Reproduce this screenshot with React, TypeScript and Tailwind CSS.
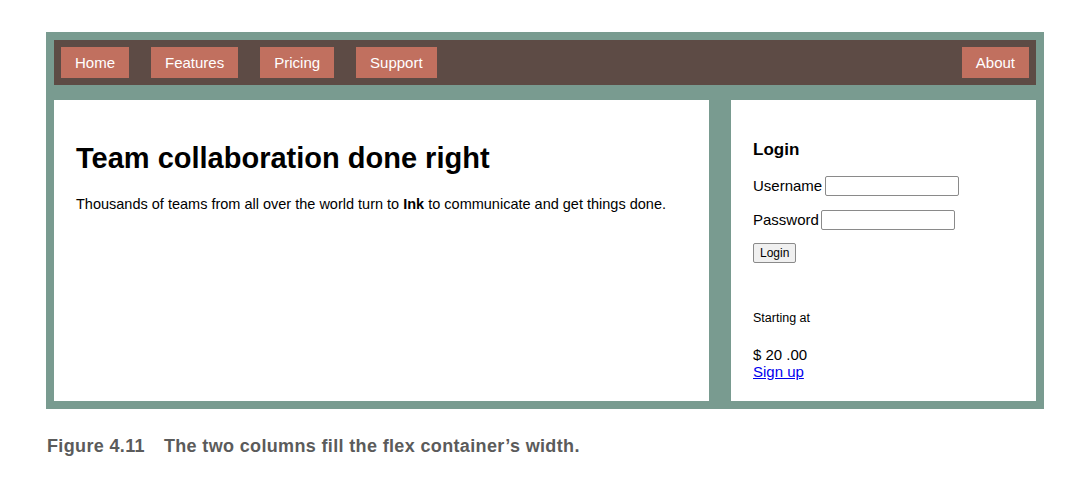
import React from "react";

const navItems = ["Home", "Features", "Pricing", "Support"];

export default function App() {
  return (
    <div className="w-[1078px] h-[486px] bg-white pt-[32px] pl-[46px] font-['Liberation_Sans',Arial,sans-serif]">
      {/* page frame */}
      <div className="w-[998px] h-[377px] bg-[#799b90] p-[8px] flex flex-col gap-[15px]">
        {/* nav bar */}
        <nav className="h-[45px] bg-[#5d4b45] px-[7px] flex items-center">
          <ul className="flex items-center gap-[22px] w-full">
            {navItems.map((item) => (
              <li key={item}>
                <a className="block h-[31px] px-[14px] bg-[#c1705f] text-white text-[15px] leading-[31px]">
                  {item}
                </a>
              </li>
            ))}
            <li className="ml-auto">
              <a className="block h-[31px] px-[14px] bg-[#c1705f] text-white text-[15px] leading-[31px]">
                About
              </a>
            </li>
          </ul>
        </nav>

        {/* two columns */}
        <div className="flex-1 flex gap-[22px]">
          <main className="w-[655px] bg-white pt-[41px] px-[22px]">
            <h1 className="text-[29px] font-bold leading-[35px] text-black">
              Team collaboration done right
            </h1>
            <p className="mt-[19px] text-[14.5px] leading-[18px] text-black">
              Thousands of teams from all over the world turn to <b>Ink</b> to communicate and get things done.
            </p>
          </main>

          <aside className="flex-1 bg-white pt-[39px] px-[22px] text-black">
            <h3 className="text-[17px] font-bold leading-[22px]">Login</h3>
            <form className="mt-[14px]">
              <div className="flex items-center h-[22px] text-[15px]">
                <label>Username</label>
                <input className="ml-[3px] w-[134px] h-[20px] border border-[#8a8a8a] rounded-[2px]" />
              </div>
              <div className="flex items-center h-[22px] mt-[12px] text-[15px]">
                <label>Password</label>
                <input className="ml-[2px] w-[134px] h-[20px] border border-[#8a8a8a] rounded-[2px]" />
              </div>
              <button
                type="button"
                className="mt-[12px] h-[20px] px-[6px] border border-[#8a8a8a] rounded-[2px] bg-[#f0f0f0] text-[12px] leading-[18px]"
              >
                Login
              </button>
            </form>
            <p className="mt-[46px] text-[12.5px] leading-[16px]">Starting at</p>
            <p className="mt-[20px] text-[15px] leading-[17px]">$ 20 .00</p>
            <a className="block text-[15px] leading-[17px] text-[#0000ee] underline">Sign up</a>
          </aside>
        </div>
      </div>

      <p className="mt-[27px] ml-[1px] text-[18px] font-bold text-[#5b5b5b] leading-[20px] tracking-[0.35px]">
        Figure 4.11<span className="inline-block w-[19px]" />The two columns fill the flex container’s width.
      </p>
    </div>
  );
}
